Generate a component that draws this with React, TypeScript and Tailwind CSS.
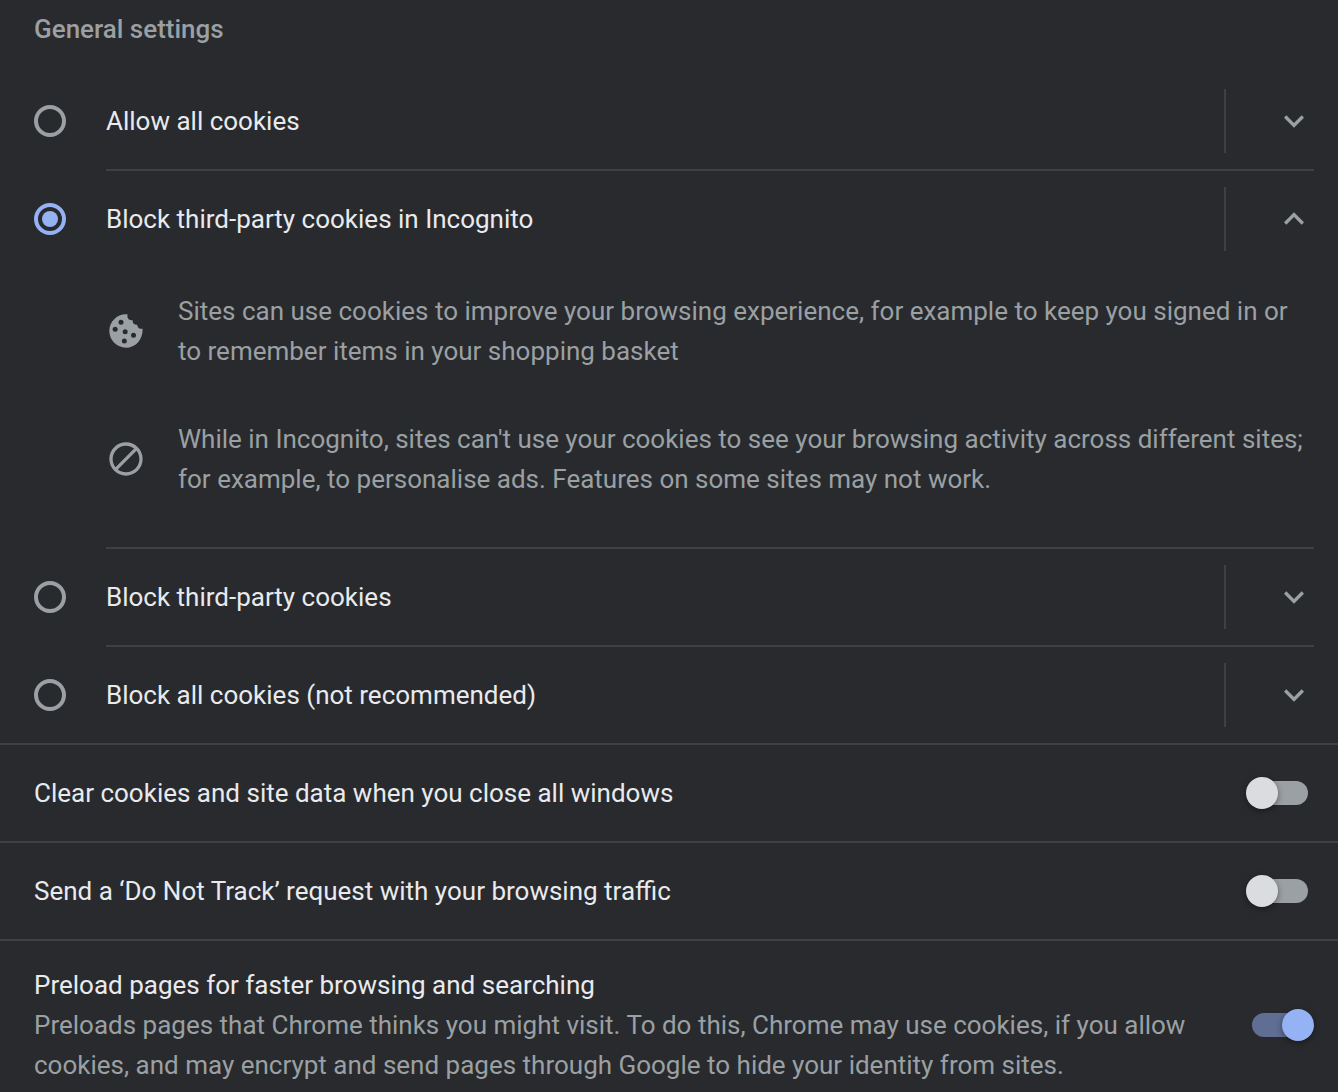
import React, { useState } from "react";

function Chevron({ up }: { up: boolean }) {
  return (
    <svg viewBox="0 0 24 24" className="size-10" fill="#9aa0a3" aria-hidden="true">
      {up ? (
        <path d="M12 8l-6 6 1.41 1.41L12 10.83l4.59 4.58L18 14z" />
      ) : (
        <path d="M16.59 8.59L12 13.17 7.41 8.59 6 10l6 6 6-6z" />
      )}
    </svg>
  );
}

function CookieIcon() {
  return (
    <svg viewBox="0 0 24 24" className="size-10 shrink-0" aria-hidden="true">
      <path
        fill="#9aa0a3"
        d="M21.95 10.6C20.6 10.9 19.4 10.4 19 9.3 18.9 8.9 18.8 8.6 18.8 8.2 17.6 8.5 16.4 7.9 16.1 6.8 16 6.4 16 6 16 5.5 14.2 5.7 13 4.9 12.9 3.6 12.8 3 12.8 2.5 13 2.05 12.7 2 12.3 2 12 2 6.48 2 2 6.48 2 12s4.48 10 10 10 10.3-4.8 9.95-11.4z"
      />
      <g fill="#292a2d">
        <circle cx="9" cy="6.8" r="1.5" />
        <circle cx="5.5" cy="11" r="1.5" />
        <circle cx="11.5" cy="12.4" r="1.5" />
        <circle cx="16.5" cy="14.5" r="1.5" />
        <circle cx="11" cy="18" r="1.5" />
      </g>
    </svg>
  );
}

function BlockIcon() {
  return (
    <svg viewBox="0 0 24 24" className="size-10 shrink-0" fill="#9aa0a3" aria-hidden="true">
      <path d="M12 2C6.48 2 2 6.48 2 12s4.48 10 10 10 10-4.48 10-10S17.52 2 12 2zM4 12c0-4.42 3.58-8 8-8 1.85 0 3.55.63 4.9 1.69L5.69 16.9C4.63 15.55 4 13.85 4 12zm8 8c-1.85 0-3.55-.63-4.9-1.69L18.31 7.1C19.37 8.45 20 10.15 20 12c0 4.42-3.58 8-8 8z" />
    </svg>
  );
}

const options = [
  { id: "allow", label: "Allow all cookies", details: [] },
  {
    id: "incognito",
    label: "Block third-party cookies in Incognito",
    details: [
      {
        Icon: CookieIcon,
        text: "Sites can use cookies to improve your browsing experience, for example to keep you signed in or to remember items in your shopping basket",
      },
      {
        Icon: BlockIcon,
        text: "While in Incognito, sites can't use your cookies to see your browsing activity across different sites; for example, to personalise ads. Features on some sites may not work.",
      },
    ],
  },
  { id: "third-party", label: "Block third-party cookies", details: [] },
  { id: "all", label: "Block all cookies (not recommended)", details: [] },
];

const toggles = [
  { id: "clear", label: "Clear cookies and site data when you close all windows", on: false },
  { id: "dnt", label: "Send a ‘Do Not Track’ request with your browsing traffic", on: false },
  {
    id: "preload",
    label: "Preload pages for faster browsing and searching",
    description:
      "Preloads pages that Chrome thinks you might visit. To do this, Chrome may use cookies, if you allow cookies, and may encrypt and send pages through Google to hide your identity from sites.",
    on: true,
  },
];

function Toggle({ id, defaultChecked }: { id: string; defaultChecked: boolean }) {
  return (
    <span className="relative flex h-8 w-[68px] shrink-0 items-center px-1.5">
      <input
        id={id}
        type="checkbox"
        role="switch"
        defaultChecked={defaultChecked}
        className="peer h-6 w-full cursor-pointer appearance-none rounded-full bg-[#9aa0a3] checked:bg-[#5f6e92]"
      />
      <span className="pointer-events-none absolute left-0 size-8 rounded-full bg-[#dadce0] shadow-[0_2px_6px_rgba(0,0,0,0.4)] peer-checked:right-0 peer-checked:left-auto peer-checked:bg-[#94b2f4]" />
    </span>
  );
}

export default function App() {
  const [selected, setSelected] = useState("incognito");
  const [expanded, setExpanded] = useState("incognito");

  return (
    <main className="min-h-screen bg-[#292a2d] font-['Roboto',sans-serif] text-[26px] leading-10 text-[#e8eaed]">
      <h2 id="general" className="px-[34px] pt-[9px] pb-6 font-medium text-[#9aa0a3]">
        General settings
      </h2>
      <div role="radiogroup" aria-labelledby="general">
        {options.map(({ id, label, details }) => {
          const open = expanded === id;
          return (
            <div key={id} className="group pr-6 pl-[34px]">
              <div className="flex h-24 items-center">
                <input
                  id={id}
                  type="radio"
                  name="cookies"
                  checked={selected === id}
                  onChange={() => setSelected(id)}
                  className="grid size-8 shrink-0 appearance-none place-items-center rounded-full border-4 border-[#9aa0a3] before:size-4 before:rounded-full checked:border-[#94b2f4] checked:before:bg-[#94b2f4]"
                />
                <label htmlFor={id} className="ml-10 flex-1">
                  {label}
                </label>
                <button
                  type="button"
                  aria-expanded={open}
                  aria-label={`Show details for ${label}`}
                  onClick={() => setExpanded(open ? "" : id)}
                  className="flex h-16 items-center border-l-2 border-[#3f4042] pl-12"
                >
                  <Chevron up={open} />
                </button>
              </div>
              {open && details.length > 0 && (
                <ul className="ml-[72px] flex flex-col gap-12 pt-6 pb-12 text-[#9aa0a3]">
                  {details.map(({ Icon, text }) => (
                    <li key={text} className="flex items-center gap-8">
                      <Icon />
                      <p>{text}</p>
                    </li>
                  ))}
                </ul>
              )}
              <div className="ml-[72px] h-0.5 bg-[#3f4042] group-last:hidden" />
            </div>
          );
        })}
      </div>
      {toggles.map(({ id, label, description, on }) => (
        <div
          key={id}
          className="flex items-center justify-between border-t-2 border-[#3f4042] pr-6 pl-[34px] pt-7 pb-7 last:pt-6 last:pb-1.5"
        >
          <div className="max-w-[1168px]">
            <label htmlFor={id} className="block">
              {label}
            </label>
            {description && <p className="text-[#9aa0a3]">{description}</p>}
          </div>
          <Toggle id={id} defaultChecked={on} />
        </div>
      ))}
    </main>
  );
}
